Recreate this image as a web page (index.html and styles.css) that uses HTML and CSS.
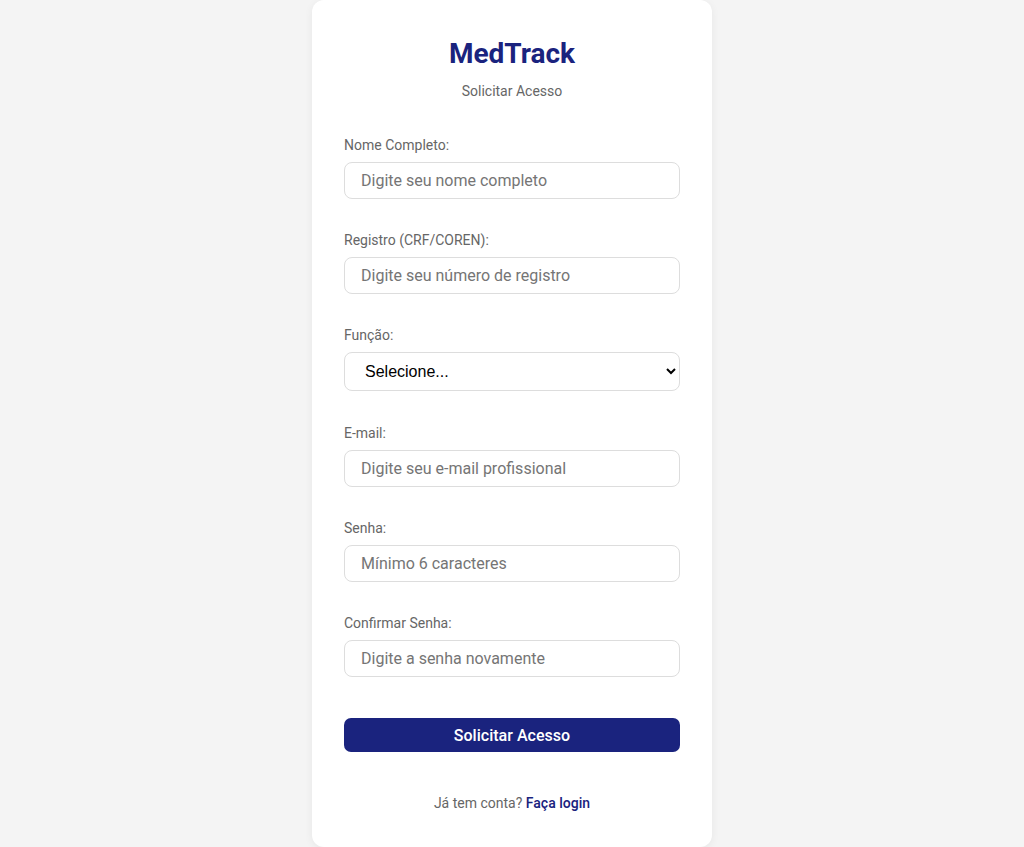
FILE: index.html
```html
<!DOCTYPE html>
<html lang="pt-BR">
<head>
<meta charset="utf-8">
<title>MedTrack - Solicitar Acesso</title>
<link rel="stylesheet" href="styles.css">
</head>
<body>
<main class="card">
  <h1 class="brand">MedTrack</h1>
  <p class="subtitle">Solicitar Acesso</p>
  <form class="form">
    <div class="group">
      <label class="label">Nome Completo:</label>
      <input class="field" type="text" placeholder="Digite seu nome completo">
    </div>
    <div class="group">
      <label class="label">Registro (CRF/COREN):</label>
      <input class="field" type="text" placeholder="Digite seu número de registro">
    </div>
    <div class="group">
      <label class="label">Função:</label>
      <select class="field select">
        <option>Selecione...</option>
      </select>
    </div>
    <div class="group">
      <label class="label">E-mail:</label>
      <input class="field" type="email" placeholder="Digite seu e-mail profissional">
    </div>
    <div class="group">
      <label class="label">Senha:</label>
      <input class="field" type="password" placeholder="Mínimo 6 caracteres">
    </div>
    <div class="group">
      <label class="label">Confirmar Senha:</label>
      <input class="field" type="password" placeholder="Digite a senha novamente">
    </div>
    <button class="submit" type="button">Solicitar Acesso</button>
  </form>
  <p class="footer">Já tem conta? <a class="link" href="#">Faça login</a></p>
</main>
</body>
</html>
```
FILE: styles.css
```css
html, body {
  margin: 0;
  padding: 0;
}
body {
  background: #f4f4f4;
  font-family: Roboto, "Liberation Sans", sans-serif;
  display: flex;
  justify-content: center;
  height: 847px;
  overflow: hidden;
}
.card {
  width: 400px;
  box-sizing: border-box;
  background: #fff;
  border-radius: 12px;
  box-shadow: 0 2px 8px rgba(0,0,0,0.06);
  padding: 37px 32px 36px;
  height: 847px;
}
.brand {
  margin: 0;
  text-align: center;
  font-size: 28px;
  line-height: 33px;
  font-weight: 700;
  color: #1a237e;
}
.subtitle {
  margin: 13px 0 0;
  text-align: center;
  font-size: 14px;
  line-height: 16px;
  color: #666;
}
.form {
  margin-top: 38px;
  display: flex;
  flex-direction: column;
}
.group {
  display: flex;
  flex-direction: column;
  margin-bottom: 33px;
}
.label {
  font-size: 14px;
  line-height: 16px;
  color: #666;
  margin-bottom: 9px;
}
.field {
  box-sizing: border-box;
  width: 100%;
  height: 37px;
  border: 1px solid #ddd;
  border-radius: 8px;
  padding: 0 16px;
  font-family: Roboto, "Liberation Sans", sans-serif;
  font-size: 16px;
  color: #333;
  background: #fff;
  outline: none;
}
.field::placeholder {
  color: #757575;
}
.select {
  height: 39px;
  padding: 0 12px 0 16px;
  font-family: "Liberation Sans", Arial, sans-serif;
  color: #000;
  margin-bottom: 1px;
}
.submit {
  margin-top: 8px;
  height: 34px;
  border: none;
  border-radius: 7px;
  background: #1a237e;
  color: #fff;
  font-family: "Roboto Medium", Roboto, "Liberation Sans", sans-serif;
  font-size: 16px;
  font-weight: 400;
}
.footer {
  margin: 43px 0 0;
  text-align: center;
  font-size: 14px;
  line-height: 16px;
  color: #666;
}
.link {
  color: #1a237e;
  font-family: "Roboto Medium", Roboto, sans-serif;
  font-weight: 700;
  text-decoration: none;
}
```
